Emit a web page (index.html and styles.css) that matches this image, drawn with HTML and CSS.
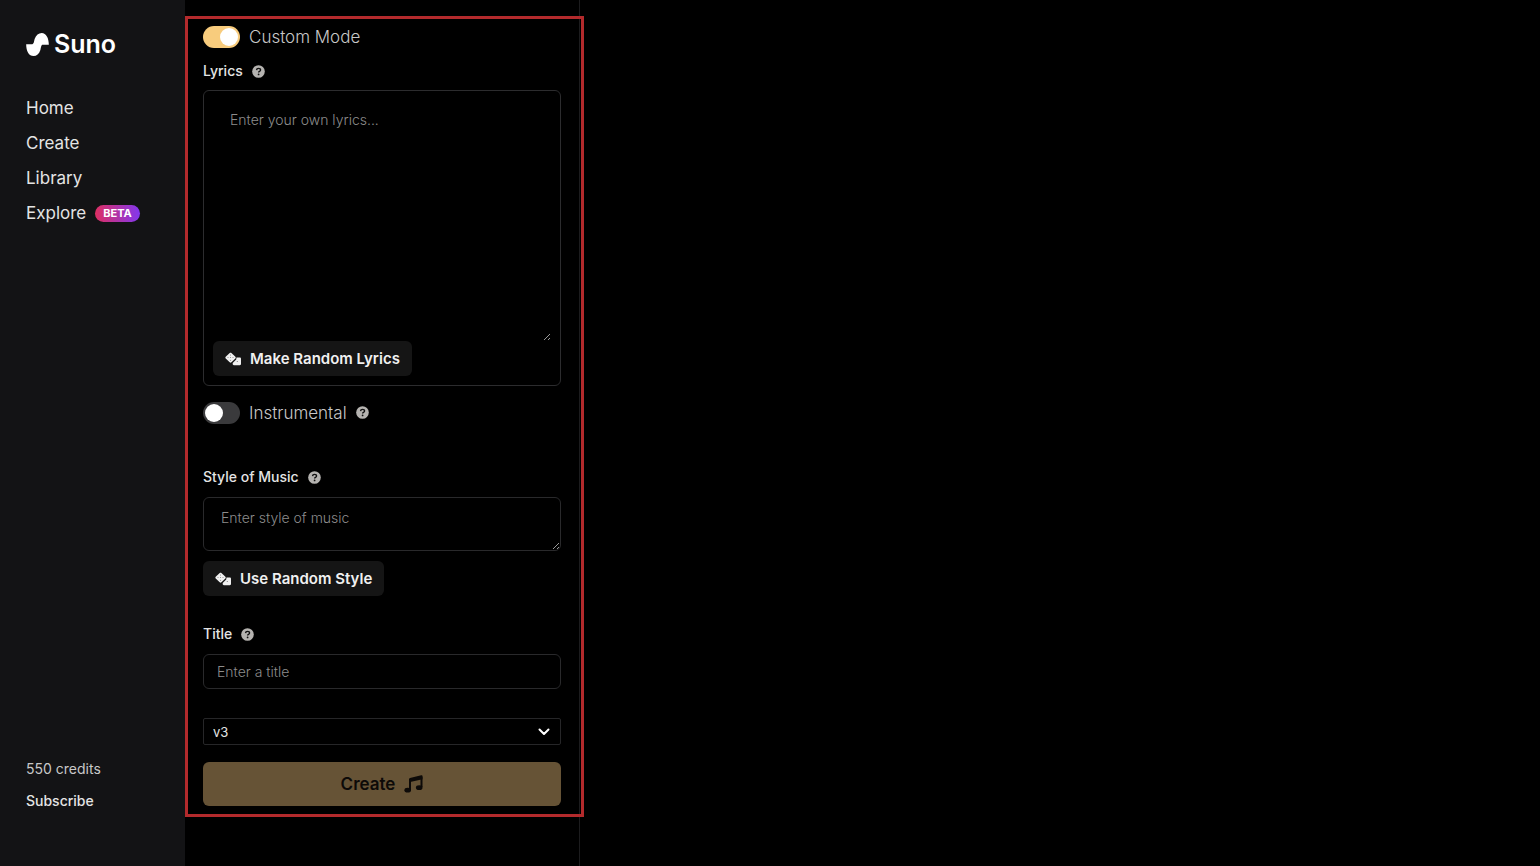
FILE: index.html
```html
<!DOCTYPE html>
<html lang="en">
<head>
<meta charset="utf-8">
<meta name="viewport" content="width=device-width, initial-scale=1">
<title>Suno</title>
<link rel="stylesheet" href="styles.css">
</head>
<body>
<svg class="sprite" aria-hidden="true">
  <symbol id="help" viewBox="0 0 14 14">
    <circle cx="7" cy="7" r="6.8" fill="#b5b3b0"/>
    <path d="M4.900 5.500C5 4.200 5.900 3.600 7 3.600c1.300 0 2.200.7 2.200 1.800 0 1.500-2.100 1.500-2.100 2.800" fill="none" stroke="#111" stroke-width="1.500"/>
    <circle cx="7.100" cy="10.200" r=".95" fill="#111"/>
  </symbol>
  <symbol id="dice" viewBox="0 0 16 14">
    <path d="M11.500 5.500h3.300c.7 0 1.200.5 1.200 1.200v5.300c0 .7-.5 1.200-1.200 1.200H8.900c-.7 0-1.200-.5-1.200-1.200v-1l3.500-3.500z" fill="#f0f0f0"/>
    <path d="M4.700 1c.5-.5 1.200-.5 1.700 0l4 3.800c.5.500.5 1.200 0 1.700l-4 3.800c-.5.500-1.200.5-1.700 0l-4-3.800c-.5-.5-.5-1.200 0-1.700z" fill="#f0f0f0"/>
    <g fill="#777"><circle cx="5.500" cy="3" r=".5"/><circle cx="3" cy="5.600" r=".5"/><circle cx="5.500" cy="5.600" r=".5"/><circle cx="8" cy="5.600" r=".5"/><circle cx="5.500" cy="8.200" r=".5"/><circle cx="12.300" cy="9.500" r=".6"/></g>
  </symbol>
</svg>
<div class="app">
  <aside class="sidebar">
    <a class="logo" href="#">
      <svg class="logo-mark" viewBox="79 96 67 68" aria-hidden="true"><path fill="#fff" d="M79 129H97C102 129 102 121 104 114C108 102 116 96 125 96C138 96 146 111 146 131H128C123 131 123 139 121 146C117 158 110 164 101 164C87 164 79 149 79 129Z"/></svg>
      <span>Suno</span>
    </a>
    <nav class="nav">
      <a href="#">Home</a>
      <a href="#">Create</a>
      <a href="#">Library</a>
      <a href="#">Explore <span class="badge">BETA</span></a>
    </nav>
    <div class="account">
      <span class="credits">550 credits</span>
      <a href="#">Subscribe</a>
    </div>
  </aside>
  <main class="panel">
    <form class="form">
      <div class="toggle-row">
        <input class="switch" type="checkbox" id="custom" checked>
        <label for="custom">Custom Mode</label>
      </div>
      <div class="label-row lyrics-label">
        <label for="lyrics">Lyrics</label>
        <svg class="help"><use href="#help"/></svg>
      </div>
      <div class="lyrics-box">
        <textarea id="lyrics" class="lyrics" placeholder="Enter your own lyrics..."></textarea>
        <button type="button" class="random"><svg class="dice"><use href="#dice"/></svg>Make Random Lyrics</button>
      </div>
      <div class="toggle-row instrumental">
        <input class="switch" type="checkbox" id="instrumental">
        <label for="instrumental">Instrumental</label>
        <svg class="help"><use href="#help"/></svg>
      </div>
      <div class="label-row style-label">
        <label for="style">Style of Music</label>
        <svg class="help"><use href="#help"/></svg>
      </div>
      <textarea id="style" class="style-input" placeholder="Enter style of music"></textarea>
      <button type="button" class="random"><svg class="dice"><use href="#dice"/></svg>Use Random Style</button>
      <div class="label-row title-label">
        <label for="title">Title</label>
        <svg class="help"><use href="#help"/></svg>
      </div>
      <input id="title" class="title-input" type="text" placeholder="Enter a title">
      <div class="select-wrap">
        <select class="version" aria-label="Version"><option>v3</option></select>
        <svg class="chevron" viewBox="0 0 12 8" aria-hidden="true"><path d="M1.500 1.500 6 6l4.500-4.500" fill="none" stroke="#fff" stroke-width="2" stroke-linecap="round" stroke-linejoin="round"/></svg>
      </div>
      <button type="button" class="create">Create
        <svg class="note" viewBox="0 0 19 18" aria-hidden="true"><path d="M6 15V4.500M17.500 12V2" fill="none" stroke="#0d0a08" stroke-width="2"/><path d="M5 4.200Q5 3.300 6 3L17.200.3Q18.500 0 18.500 1.200V4.300L5 7.300Z" fill="#0d0a08"/><ellipse cx="3.700" cy="15.200" rx="3.300" ry="2.400" fill="#0d0a08"/><ellipse cx="15.200" cy="12.700" rx="3.300" ry="2.400" fill="#0d0a08"/></svg>
      </button>
    </form>
    <div class="outline"></div>
  </main>
</div>
</body>
</html>
```
FILE: styles.css
```css
* { box-sizing: border-box; }
body {
  margin: 0;
  background: #000;
  color: #e4e4e4;
  color-scheme: dark;
  font-family: Inter, "Liberation Sans", sans-serif;
  font-size: 14px;
  line-height: 20px;
}
a { color: inherit; text-decoration: none; }
button, input, textarea, select { font: inherit; color: inherit; margin: 0; }
.sprite { position: absolute; width: 0; height: 0; }
.app { display: flex; min-height: 100vh; }

.sidebar {
  display: flex;
  flex-direction: column;
  flex: 0 0 185px;
  padding: 28px 26px 55px;
  background: #131315;
}
.logo {
  display: flex;
  align-items: center;
  gap: 5px;
  color: #fff;
  font-size: 25px;
  font-weight: 600;
  line-height: 32px;
}
.logo-mark { width: 23px; height: 23px; }
.nav { display: flex; flex-direction: column; gap: 11px; margin-top: 36px; font-size: 17px; line-height: 24px; }
.nav a { display: flex; align-items: center; gap: 9px; }
.badge {
  padding: 0 8px;
  border-radius: 9px;
  background: linear-gradient(90deg, #de2f62, #8237ee);
  color: #fff;
  font-size: 11px;
  font-weight: 700;
  line-height: 17px;
}
.account { display: flex; flex-direction: column; gap: 12px; margin-top: auto; }
.account a { font-weight: 500; }
.credits { color: #c8c8c8; }

.panel { position: relative; flex: 0 0 395px; padding: 24px 18px 60px; border-right: 1px solid #1c1c1e; }
.outline { position: absolute; top: 16px; left: 0; right: -5px; bottom: 49px; border: 3px solid #b32a2c; pointer-events: none; }
.form { display: flex; flex-direction: column; align-items: stretch; }
.toggle-row { display: flex; align-items: center; gap: 9px; height: 25px; color: #c8c8c8; font-size: 17px; font-weight: 300; }
.switch {
  appearance: none;
  width: 37px;
  height: 22px;
  padding: 2px;
  border-radius: 11px;
  background: #3a3a3c;
}
.switch::before { content: ""; display: block; width: 18px; height: 18px; border-radius: 50%; background: #fff; }
.switch:checked { background: #f8cc7d; }
.switch:checked::before { margin-left: auto; }
.help { width: 13px; height: 13px; }
.label-row { display: flex; align-items: center; gap: 9px; font-weight: 500; }
.lyrics-label { margin: 12px 0 9px; }
.style-label { margin: 42px 0 10px; }
.title-label { margin: 28px 0 10px; }

textarea, .title-input { border: 1px solid #29292b; border-radius: 6px; background: transparent; outline: none; font-weight: 300; }
::placeholder { color: #8c8c8c; opacity: 1; }
.lyrics-box { display: flex; flex-direction: column; padding: 9px; border: 1px solid #2c2c2e; border-radius: 6px; }
.lyrics { height: 241px; padding: 10px 17px; border: 0; }
.random {
  display: flex;
  align-items: center;
  align-self: flex-start;
  gap: 9px;
  height: 35px;
  padding: 0 12px;
  border: 0;
  border-radius: 6px;
  background: #151515;
  color: #f0f0f0;
  font-size: 15px;
  font-weight: 600;
}
.dice { width: 16px; height: 14px; }
.instrumental { margin-top: 14px; }
.style-input { height: 54px; padding: 10px 17px; margin-bottom: 10px; }
.title-input { height: 35px; padding: 0 13px; }
.select-wrap { display: grid; align-items: center; margin: 29px 0 17px; }
.version { grid-area: 1 / 1; appearance: none; height: 27px; padding: 0 9px; border: 1px solid #262628; border-radius: 2px; background: #000; font-size: 13px; }
.chevron { grid-area: 1 / 1; justify-self: end; width: 12px; height: 8px; margin-right: 11px; pointer-events: none; }
.create {
  display: flex;
  align-items: center;
  justify-content: center;
  gap: 9px;
  height: 44px;
  border: 0;
  border-radius: 6px;
  background: #665336;
  color: #0d0a08;
  font-size: 17px;
  font-weight: 600;
}
.note { width: 19px; height: 18px; }
```
